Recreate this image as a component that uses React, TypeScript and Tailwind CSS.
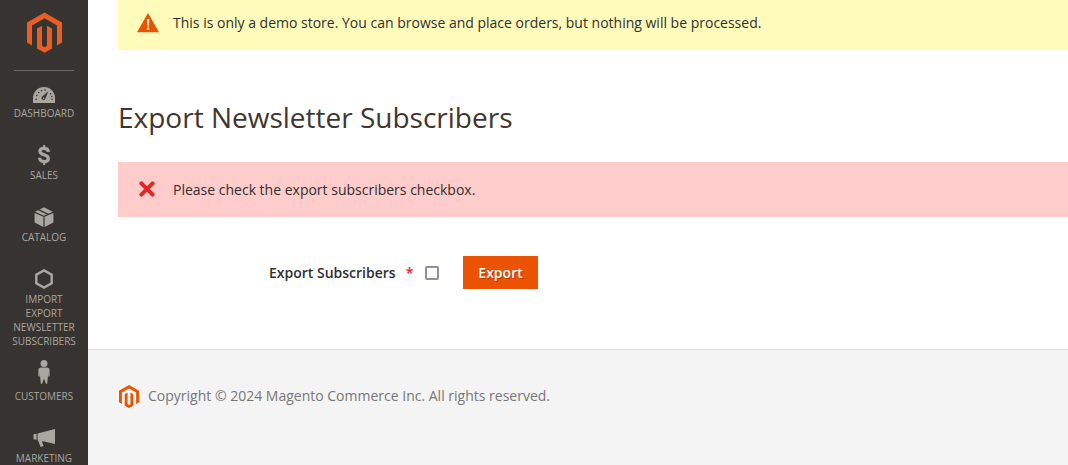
import { useState } from "react";
import type { ReactNode } from "react";

function MagentoLogo({ className }: { className: string }) {
  return (
    <svg viewBox="0 0 35 40" className={className} fill="currentColor" aria-hidden="true">
      <path d="M17.5 0 0 10v20l5 3V13L17.5 5.8 30 13v20l5-3V10z" />
      <path d="M15 13.2 10 16v20l7.5 4.2L25 36V16l-5-2.8v20.1l-2.5 1.5-2.5-1.5z" />
    </svg>
  );
}

type NavItem = { lines: string[]; icon: ReactNode };

const navItems: NavItem[] = [
  {
    lines: ["DASHBOARD"],
    icon: (
      <svg viewBox="0 0 22 16" className="mt-1 h-4 w-[22px]" aria-hidden="true">
        <path d="M0 16v-5a11 11 0 0 1 22 0v5z" fill="currentColor" />
        <g fill="#373330">
          <path d="M15.3 4.2 12.6 11a2 2 0 1 1-3.3-1.6z" />
          <circle cx="3.2" cy="12.2" r="0.8" />
          <circle cx="3.8" cy="8.6" r="0.8" />
          <circle cx="5.8" cy="5.6" r="0.8" />
          <circle cx="8.6" cy="3.6" r="0.8" />
          <circle cx="12" cy="3.1" r="0.8" />
          <circle cx="17.5" cy="6.8" r="0.8" />
          <circle cx="18.8" cy="9.5" r="0.8" />
          <circle cx="19" cy="12.2" r="0.8" />
        </g>
        <circle cx="10.8" cy="11.4" r="0.8" fill="currentColor" />
      </svg>
    ),
  },
  {
    lines: ["SALES"],
    icon: (
      <svg viewBox="0 0 12 20" className="h-5 w-3" fill="none" stroke="currentColor" aria-hidden="true">
        <path
          d="M10.3 7C10.2 4.4 8.5 3.3 6 3.3 3.5 3.3 1.9 4.4 1.9 6.2c0 4.6 8.4 2.5 8.4 7.2 0 2.1-1.7 3.2-4.2 3.2-2.7 0-4.4-1.2-4.5-3.8"
          strokeWidth="3.2"
        />
        <path d="M6.1 0v3M6.1 16.5V20" strokeWidth="2" />
      </svg>
    ),
  },
  {
    lines: ["CATALOG"],
    icon: (
      <svg viewBox="0 0 20 20" className="h-5 w-5" fill="currentColor" aria-hidden="true">
        <path d="M.6 6 9.4 9.8V20L.6 15.4zM19.4 6l-8.8 3.8V20l8.8-4.6z" />
        <path d="M1.2 4.8 4.2 3.3l8.6 4.3L10 8.7zM5.6 2.6 10 .2l8.8 4.6-4.4 2z" />
      </svg>
    ),
  },
  {
    lines: ["IMPORT", "EXPORT", "NEWSLETTER", "SUBSCRIBERS"],
    icon: (
      <svg viewBox="0 0 18 20" className="h-5 w-[18px]" fill="none" aria-hidden="true">
        <path d="m9 1.4 7.7 4.3v8.6L9 18.6l-7.7-4.3V5.7z" stroke="currentColor" strokeWidth="2.4" />
      </svg>
    ),
  },
  {
    lines: ["CUSTOMERS"],
    icon: (
      <svg viewBox="0 0 12 24" className="mb-2 h-6 w-3" fill="currentColor" aria-hidden="true">
        <circle cx="6" cy="3.6" r="3.5" />
        <path d="M3.2 7.6h5.6c1.8 0 2.8 1 2.8 2.8v6.2h-1.4v-3.4l-1 10.6H7.8L6 18.6l-1.8 5.2H2.8l-1-10.6v3.4H.4v-6.2c0-1.8 1-2.8 2.8-2.8z" />
      </svg>
    ),
  },
  {
    lines: ["MARKETING"],
    icon: (
      <svg viewBox="0 0 22 18" className="h-[18px] w-[22px]" fill="currentColor" aria-hidden="true">
        <path d="M22 0v15L10 12.2l-1.1.3 1.7 4.4-3 1.1-2.3-6.1L4.6 11V4.6zM3.6 4.8v6L.5 10.2V5.3z" />
      </svg>
    ),
  },
];

function Sidebar() {
  return (
    <aside className="w-22 shrink-0 bg-[#373330]">
      <a href="#home" aria-label="Magento Admin" className="flex justify-center pt-3 pb-[17px] text-[#eb5e23]">
        <MagentoLogo className="h-[41px] w-[35px]" />
      </a>
      <nav aria-label="Main">
        <hr className="mx-3.5 border-[#736963]" />
        <ul className="pt-[9px]">
          {navItems.map((item) => (
            <li key={item.lines[0]} className={item.lines.length > 1 ? "pb-[15px]" : "pb-[22px]"}>
              <a href={"#" + item.lines[0].toLowerCase()} className="block text-center text-[10px] leading-[14px] text-[#aaa6a0]">
                <span className="flex h-[26px] items-center justify-center">{item.icon}</span>
                {item.lines.map((line) => (
                  <span key={line} className="block">
                    {line}
                  </span>
                ))}
              </a>
            </li>
          ))}
        </ul>
      </nav>
    </aside>
  );
}

export default function App() {
  const [checked, setChecked] = useState(false);

  return (
    <div className="flex h-screen overflow-hidden bg-white font-['Open_Sans','Noto_Sans',sans-serif] text-sm text-[#303030]">
      <Sidebar />
      <div className="flex min-w-0 flex-1 flex-col">
        <main className="pl-[30px]">
          <div className="flex h-[50px] items-center bg-[#fffbbb] pb-1 pl-[19px]">
            <svg viewBox="0 0 22 20" className="mr-3.5 h-5 w-[22px]" aria-hidden="true">
              <path d="M11 0 22 19.3H0z" fill="#eb5202" />
              <path d="M9.9 6h2.4l-.4 7.6h-1.6zM9.9 14.6h2.3v2.3H9.9z" fill="#fffbbb" />
            </svg>
            <p>This is only a demo store. You can browse and place orders, but nothing will be processed.</p>
          </div>
          <h1 className="pt-[47px] pb-[25px] text-[28px] leading-10 text-[#41362f]">Export Newsletter Subscribers</h1>
          <div role="alert" className="flex h-[55px] items-center bg-[#ffcccc] pl-[21px]">
            <svg viewBox="0 0 16 18" className="mr-[18px] h-[18px] w-4" aria-hidden="true">
              <path d="m2.4 2.4 11.2 11.2M13.6 2.4 2.4 13.6" stroke="#e22626" strokeWidth="4" strokeLinecap="round" />
            </svg>
            <p>Please check the export subscribers checkbox.</p>
          </div>
          <form className="flex items-center pt-[39px] pb-[60px] pl-[151px]" onSubmit={(e) => e.preventDefault()}>
            <label htmlFor="export-subscribers" className="font-semibold">
              Export Subscribers
              <span className="ml-2.5 text-[#e22626]">*</span>
            </label>
            <input
              id="export-subscribers"
              type="checkbox"
              checked={checked}
              onChange={(e) => setChecked(e.target.checked)}
              className="ml-3 h-3.5 w-3.5 appearance-none rounded-xs border-2 border-[#8f8f9d] bg-white checked:bg-[#eb5202]"
            />
            <button
              type="submit"
              className="ml-6 h-[33px] bg-[#eb5202] px-[15px] font-semibold text-white [text-shadow:1px_1px_0_rgba(0,0,0,0.25)]"
            >
              Export
            </button>
          </form>
        </main>
        <footer className="flex flex-1 items-start border-t border-[#dddddd] bg-[#f4f4f4] pt-[35px] pl-[31px] text-[#777777]">
          <MagentoLogo className="mr-[9px] h-[23px] w-5 text-[#eb5202]" />
          <p className="leading-[22px]">Copyright © 2024 Magento Commerce Inc. All rights reserved.</p>
        </footer>
      </div>
    </div>
  );
}
